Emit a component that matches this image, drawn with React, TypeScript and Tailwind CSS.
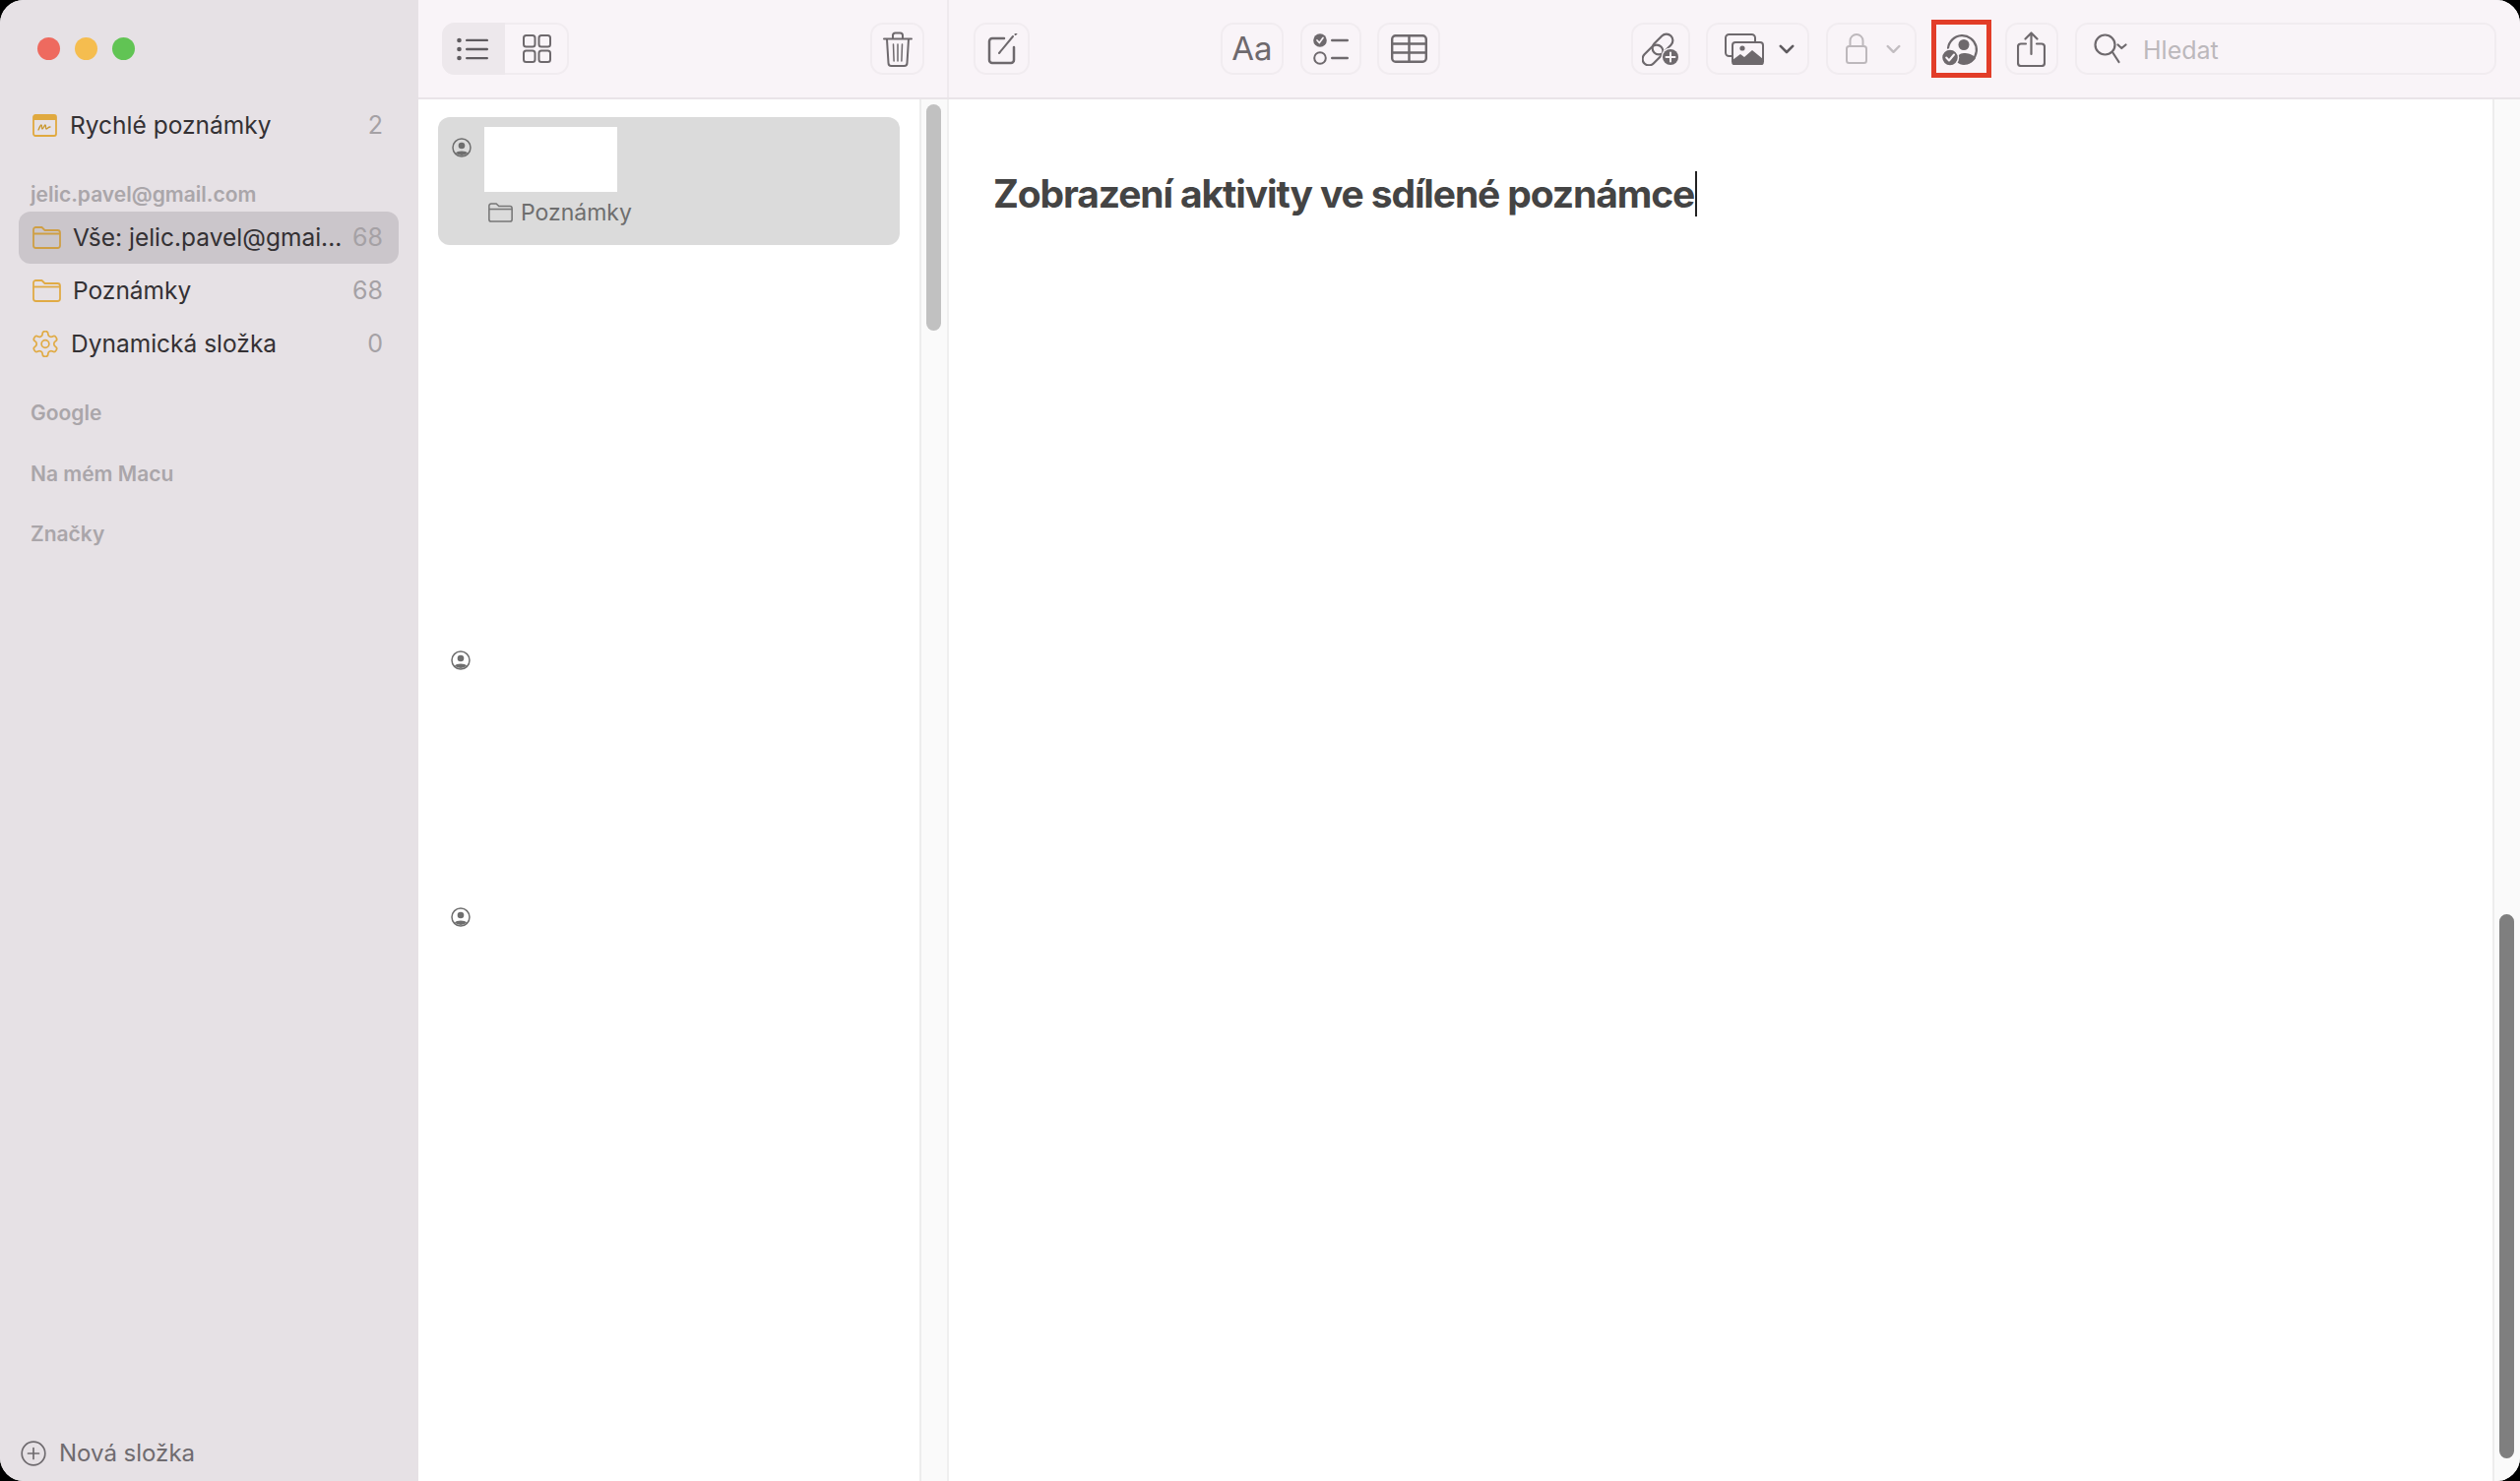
import React from "react";

const sans = { fontFamily: "Inter, 'Noto Sans', sans-serif" };

function Folder({ className, color }: { className: string; color: string }) {
  return (
    <svg viewBox="0 0 29 23" className={className} fill="none" stroke={color} strokeWidth="1.8" strokeLinejoin="round">
      <path d="M1 6V3.5A2.5 2.5 0 0 1 3.500 1h6l3 3h13A2.500 2.500 0 0 1 28 6.500V19.500A2.500 2.500 0 0 1 25.500 22H3.500A2.500 2.500 0 0 1 1 19.500Z" />
      <path d="M1 7.500H28" />
    </svg>
  );
}

function Person({ className }: { className: string }) {
  return (
    <svg viewBox="0 0 20 20" className={className}>
      <circle cx="10" cy="10" r="9" fill="none" stroke="#6e6e6e" strokeWidth="1.500" />
      <circle cx="10" cy="8" r="3.300" fill="#6e6e6e" />
      <path d="M3.800 15.500C5.500 12.800 14.500 12.800 16.200 15.500A9 9 0 0 1 3.800 15.500Z" fill="#6e6e6e" />
    </svg>
  );
}

function Chevron({ className, color }: { className: string; color: string }) {
  return (
    <svg viewBox="0 0 16 10" className={className} fill="none" stroke={color} strokeWidth="2.600" strokeLinecap="round" strokeLinejoin="round">
      <path d="M1.800 1.800 8 8l6.200-6.200" />
    </svg>
  );
}

function SidebarRow({ label, count, selected, icon, gap }: { label: string; count: string; selected?: boolean; icon: React.ReactNode; gap: string }) {
  return (
    <div className={`ml-[19px] mr-[20px] flex h-[53px] items-center rounded-[12px] pl-[14px] pr-[16px] ${selected ? "bg-[#cbc6cb]" : ""}`}>
      {icon}
      <span className={`${gap} min-w-0 flex-1 whitespace-nowrap text-[24.500px] text-[#343134]`}>{label}</span>
      <span className="ml-1 text-[25px] text-[#a5a1a5]">{count}</span>
    </div>
  );
}

function SectionLabel({ children, className }: { children: string; className: string }) {
  return <div className={`h-[30px] pl-[31px] text-[21px] font-semibold leading-[30px] text-[#aaa6aa] ${className}`}>{children}</div>;
}

function ToolButton({ className, children }: { className: string; children: React.ReactNode }) {
  return (
    <div className={`flex h-[53px] items-center justify-center rounded-[13px] border-2 border-[#f1ecf0] ${className}`}>{children}</div>
  );
}

export default function App() {
  return (
    <div className="h-[1505px] w-[2560px] overflow-hidden bg-black" style={sans}>
      <div className="flex h-full w-full overflow-hidden rounded-[24px] bg-white">
        {/* sidebar */}
        <aside className="flex h-full w-[425px] shrink-0 flex-col bg-[#e6e1e5]">
          <div className="flex gap-[15px] pl-[38px] pt-[38px]">
            <span className="h-[23px] w-[23px] rounded-full bg-[#ee6a5f]" />
            <span className="h-[23px] w-[23px] rounded-full bg-[#f5bd4f]" />
            <span className="h-[23px] w-[23px] rounded-full bg-[#61c454]" />
          </div>
          <div className="mt-[40px]">
            <SidebarRow
              label="Rychlé poznámky"
              count="2"
              gap="ml-[13px]"
              icon={
                <svg viewBox="0 0 25 23" className="h-[23px] w-[25px] shrink-0">
                  <rect x="1" y="1" width="23" height="21" rx="2" fill="none" stroke="#e0a93f" strokeWidth="1.800" />
                  <path d="M1 2.500A1.500 1.500 0 0 1 2.500 1h20A1.500 1.500 0 0 1 24 2.500V6H1Z" fill="#e0a93f" />
                  <path d="M6 16c1-2 2-5 3-5s0 4 1 4 2-4 3-4 0 4 1 4 2-2 4-2" fill="none" stroke="#c9982f" strokeWidth="1.300" strokeLinecap="round" />
                </svg>
              }
            />
          </div>
          <SectionLabel className="mt-[29px]">jelic.pavel@gmail.com</SectionLabel>
          <div className="mt-[2px] flex flex-col gap-px">
            <SidebarRow label="Vše: jelic.pavel@gmai..." count="68" selected gap="ml-[12px]" icon={<Folder className="h-[23px] w-[29px] shrink-0" color="#cf9f45" />} />
            <SidebarRow label="Poznámky" count="68" gap="ml-[12px]" icon={<Folder className="h-[23px] w-[29px] shrink-0" color="#e0ab45" />} />
            <SidebarRow
              label="Dynamická složka"
              count="0"
              gap="ml-[13px]"
              icon={
                <svg viewBox="2 1.500 20 21" className="h-[27px] w-[26px] shrink-0" fill="none" stroke="#e0ab45" strokeWidth="1.350" strokeLinejoin="round">
                  <path d="M12.220 2h-.44a2 2 0 0 0-2 2v.18a2 2 0 0 1-1 1.730l-.43.250a2 2 0 0 1-2 0l-.15-.080a2 2 0 0 0-2.730.730l-.22.380a2 2 0 0 0 .730 2.730l.15.100a2 2 0 0 1 1 1.720v.510a2 2 0 0 1-1 1.740l-.15.090a2 2 0 0 0-.730 2.730l.22.380a2 2 0 0 0 2.730.730l.15-.080a2 2 0 0 1 2 0l.43.250a2 2 0 0 1 1 1.730V20a2 2 0 0 0 2 2h.44a2 2 0 0 0 2-2v-.18a2 2 0 0 1 1-1.730l.43-.250a2 2 0 0 1 2 0l.15.080a2 2 0 0 0 2.730-.730l.22-.390a2 2 0 0 0-.730-2.730l-.15-.080a2 2 0 0 1-1-1.740v-.500a2 2 0 0 1 1-1.740l.15-.090a2 2 0 0 0 .730-2.730l-.22-.380a2 2 0 0 0-2.730-.730l-.15.080a2 2 0 0 1-2 0l-.43-.250a2 2 0 0 1-1-1.730V4a2 2 0 0 0-2-2Z" />
                  <circle cx="12" cy="12" r="3" />
                </svg>
              }
            />
          </div>
          <SectionLabel className="mt-[29px]">Google</SectionLabel>
          <SectionLabel className="mt-[32px]">Na mém Macu</SectionLabel>
          <SectionLabel className="mt-[31px]">Značky</SectionLabel>
          <div className="mt-auto flex items-center pb-[13px] pl-[21px]">
            <svg viewBox="0 0 26 26" className="h-[26px] w-[26px]" fill="none" stroke="#6f6b6f" strokeWidth="1.700">
              <circle cx="13" cy="13" r="11.800" />
              <path d="M13 7.500v11M7.500 13h11" strokeLinecap="round" />
            </svg>
            <span className="ml-[13px] text-[24px] leading-[30px] text-[#6f6b6f]">Nová složka</span>
          </div>
        </aside>

        <div className="flex min-w-0 flex-1 flex-col">
          {/* toolbar */}
          <header className="flex h-[101px] shrink-0 border-b-2 border-[#e9e4e8] bg-[#f9f4f8]">
            <div className="flex w-[539px] shrink-0 items-start border-r-2 border-[#efeaee] pt-[23px]">
              <div className="ml-[24px] flex h-[53px] w-[129px] rounded-[13px] border-2 border-[#f1ecf0]">
                <div className="-m-[2px] flex h-[53px] w-[64px] items-center justify-center rounded-l-[13px] bg-[#ede8ec] pr-[3px]">
                  <svg viewBox="0 0 32 24" className="h-[24px] w-[32px]" fill="#5f5b5f">
                    <circle cx="2.500" cy="3" r="2.300" />
                    <circle cx="2.500" cy="12" r="2.300" />
                    <circle cx="2.500" cy="21" r="2.300" />
                    <rect x="9" y="1.700" width="23" height="2.400" rx="1.200" />
                    <rect x="9" y="10.800" width="23" height="2.400" rx="1.200" />
                    <rect x="9" y="19.900" width="23" height="2.400" rx="1.200" />
                  </svg>
                </div>
                <div className="flex flex-1 items-center justify-center">
                  <svg viewBox="0 0 29 29" className="ml-[4px] h-[29px] w-[29px]" fill="none" stroke="#6e696d" strokeWidth="2">
                    <rect x="1" y="1" width="11.500" height="11.500" rx="2.500" />
                    <rect x="16.500" y="1" width="11.500" height="11.500" rx="2.500" />
                    <rect x="1" y="16.500" width="11.500" height="11.500" rx="2.500" />
                    <rect x="16.500" y="16.500" width="11.500" height="11.500" rx="2.500" />
                  </svg>
                </div>
              </div>
              <ToolButton className="ml-[306px] w-[55px]">
                <svg viewBox="0 0 30 36" className="h-[36px] w-[30px]" fill="none" stroke="#6e696d" strokeWidth="2" strokeLinecap="round" strokeLinejoin="round">
                  <path d="M1 7.500h28M10 7V4a2.500 2.500 0 0 1 2.500-2.500h5A2.500 2.500 0 0 1 20 4v3" />
                  <path d="M4 8l1.500 24a3 3 0 0 0 3 3h13a3 3 0 0 0 3-3L26 8" />
                  <path d="M10.500 13l.6 17M15 13v17M19.500 13l-.6 17" strokeWidth="1.500" />
                </svg>
              </ToolButton>
            </div>
            <div className="flex flex-1 items-start pt-[23px]">
              <ToolButton className="ml-[25px] w-[57px] pl-[2px]">
                <svg viewBox="0 0 32 32" className="h-[32px] w-[32px]" fill="none" stroke="#6e696d" strokeWidth="2.500" strokeLinecap="round">
                  <path d="M17 5H5a3 3 0 0 0-3 3v19a3 3 0 0 0 3 3h19a3 3 0 0 0 3-3V14" />
                  <path d="M12 20 26 3M28.500 1l1 -1" strokeWidth="2" />
                </svg>
              </ToolButton>
              <ToolButton className="ml-[194px] w-[64px]">
                <span className="text-[33px] leading-none text-[#6e696d]">Aa</span>
              </ToolButton>
              <ToolButton className="ml-[17px] w-[62px]">
                <svg viewBox="0 0 36 32" className="h-[32px] w-[36px]">
                  <circle cx="7" cy="7" r="6.800" fill="#6e696d" />
                  <path d="M4 7l2.300 2.500L10 4.500" fill="none" stroke="#f9f4f8" strokeWidth="1.700" strokeLinecap="round" strokeLinejoin="round" />
                  <circle cx="7" cy="25" r="5.800" fill="none" stroke="#6e696d" strokeWidth="2" />
                  <rect x="18" y="5.700" width="18" height="2.500" rx="1.200" fill="#6e696d" />
                  <rect x="18" y="23.700" width="18" height="2.500" rx="1.200" fill="#6e696d" />
                </svg>
              </ToolButton>
              <ToolButton className="ml-[16px] w-[64px]">
                <svg viewBox="0 0 37 29" className="h-[29px] w-[37px]" fill="none" stroke="#6e696d" strokeWidth="2.400">
                  <rect x="1.200" y="1.200" width="34.600" height="26.600" rx="3.500" />
                  <path d="M1 9.500h35M1 18.500h35M18.500 1V28" />
                </svg>
              </ToolButton>
              <ToolButton className="ml-[194px] w-[60px]">
                <svg viewBox="0 0 38 34" className="h-[34px] w-[38px]">
                  <g fill="none" stroke="#6e696d" strokeWidth="2.200">
                    <rect x="9" y="5.500" width="24" height="13" rx="6.500" transform="rotate(-45 21 12)" />
                    <rect x="-1" y="16.500" width="24" height="13" rx="6.500" transform="rotate(-45 11 23)" />
                  </g>
                  <circle cx="29" cy="25" r="9.500" fill="#f9f4f8" />
                  <circle cx="29" cy="25" r="8" fill="#6e696d" />
                  <path d="M29 20.500v9M24.500 25h9" stroke="#f9f4f8" strokeWidth="2" strokeLinecap="round" />
                </svg>
              </ToolButton>
              <ToolButton className="ml-[16px] w-[105px] gap-[15px] pl-[3px]">
                <svg viewBox="0 0 40 32" className="h-[32px] w-[40px]">
                  <rect x="1" y="1" width="30" height="22" rx="3.500" fill="none" stroke="#6e696d" strokeWidth="2" />
                  <rect x="7" y="8" width="33" height="24" rx="3.500" fill="#f9f4f8" />
                  <rect x="8" y="9" width="31" height="22.500" rx="3" fill="none" stroke="#6e696d" strokeWidth="2" />
                  <circle cx="18" cy="15" r="2.600" fill="#6e696d" />
                  <path d="M8 27l8-6 4 3 8-7 11 9v3a2.500 2.500 0 0 1-2.500 2.500h-26A2.500 2.500 0 0 1 8 29Z" fill="#6e696d" />
                </svg>
                <Chevron className="h-[10px] w-[16px]" color="#5f5b5f" />
              </ToolButton>
              <ToolButton className="ml-[17px] w-[92px] gap-[19px] pl-[4px]">
                <svg viewBox="0 0 22 31" className="h-[31px] w-[22px]" fill="none" stroke="#bdb8bc" strokeWidth="2">
                  <rect x="1" y="13" width="20" height="17" rx="2.500" />
                  <path d="M4.500 13V7.500a6.500 6.500 0 0 1 13 0V13" />
                </svg>
                <Chevron className="h-[10px] w-[15px]" color="#c2bdc1" />
              </ToolButton>
              <div className="-mt-[3px] ml-[15px] flex h-[59px] w-[61px] items-center justify-center border-[5px] border-[#e23d28]">
                <svg viewBox="0 0 39 34" className="h-[34px] w-[39px] shrink-0">
                  <path d="M6 16A14.500 14.500 0 1 1 26 31" fill="none" stroke="#6e696d" strokeWidth="2.200" strokeLinecap="round" />
                  <circle cx="22" cy="12.500" r="5.500" fill="#6e696d" />
                  <path d="M15 30c-1-6 3-9 7-9s9 1 12 5c-2.500 4-7 7-12 7-2.500 0-5-1-7-3Z" fill="#6e696d" />
                  <circle cx="8" cy="25.500" r="8.500" fill="#6e696d" stroke="#f9f4f8" strokeWidth="1.500" />
                  <path d="M4.200 25.500l2.800 3 5-6" fill="none" stroke="#f9f4f8" strokeWidth="2" strokeLinecap="round" strokeLinejoin="round" />
                </svg>
              </div>
              <ToolButton className="ml-[14px] w-[54px] pr-[2px]">
                <svg viewBox="0 0 29 36" className="h-[36px] w-[29px]" fill="none" stroke="#6e696d" strokeWidth="2.200" strokeLinecap="round" strokeLinejoin="round">
                  <path d="M9 12.500H4a3 3 0 0 0-3 3V32a3 3 0 0 0 3 3h21a3 3 0 0 0 3-3V15.500a3 3 0 0 0-3-3h-5" />
                  <path d="M14.500 23V2M8.500 7.500l6-6 6 6" />
                </svg>
              </ToolButton>
              <div className="ml-[17px] flex h-[53px] w-[428px] items-center rounded-[13px] border-2 border-[#f1ecf0] pl-[17px]">
                <svg viewBox="0 0 34 31" className="h-[31px] w-[34px]" fill="none" stroke="#6e696d" strokeWidth="2.200" strokeLinecap="round" strokeLinejoin="round">
                  <circle cx="11.500" cy="11.500" r="10" />
                  <path d="M19 19l6.500 10" />
                  <path d="M24.500 11.500l3.800 3.500 4.200-3.500" />
                </svg>
                <span className="ml-[16px] pt-[5px] text-[25px] text-[#bcb8bc]">Hledat</span>
              </div>
            </div>
          </header>

          <div className="flex min-h-0 flex-1">
            {/* note list */}
            <section className="flex w-[539px] shrink-0 border-r-2 border-[#efefef]">
              <div className="flex-1 pl-[20px] pr-[20px] pt-[18px]">
                <div className="flex h-[130px] rounded-[12px] bg-[#dbdbdb] pl-[14px] pt-[10px]">
                  <Person className="mt-[11px] h-[20px] w-[20px]" />
                  <div className="ml-[13px]">
                    <div className="h-[66px] w-[135px] bg-white" />
                    <div className="ml-[4px] mt-[7px] flex items-center">
                      <Folder className="h-[20px] w-[25px]" color="#777" />
                      <span className="ml-[8px] text-[23px] leading-[28px] text-[#6e6e6e]">Poznámky</span>
                    </div>
                  </div>
                </div>
                <Person className="ml-[13px] mt-[412px] h-[20px] w-[20px]" />
                <Person className="ml-[13px] mt-[241px] h-[20px] w-[20px]" />
              </div>
              <div className="w-[28px] shrink-0 border-l-2 border-[#ededed] bg-[#fafafa] pl-[5px] pt-[5px]">
                <div className="h-[230px] w-[15px] rounded-full bg-[#c1c1c1]" />
              </div>
            </section>

            {/* editor */}
            <main className="flex min-w-0 flex-1">
              <div className="flex-1 pl-[45px] pt-[70px]">
                <div className="flex h-[52px] items-center">
                  <span className="text-[39px] font-bold leading-[52px] tracking-[-1.120px] text-[#444444]">Zobrazení aktivity ve sdílené poznámce</span>
                  <span className="ml-px h-[46px] w-[2px] bg-[#222222]" />
                </div>
              </div>
              <div className="w-[28px] shrink-0 border-l-2 border-[#ededed] bg-[#fafafa] pl-[5px] pt-[828px]">
                <div className="h-[553px] w-[15px] rounded-full bg-[#7f7f7f]" />
              </div>
            </main>
          </div>
        </div>
      </div>
    </div>
  );
}
